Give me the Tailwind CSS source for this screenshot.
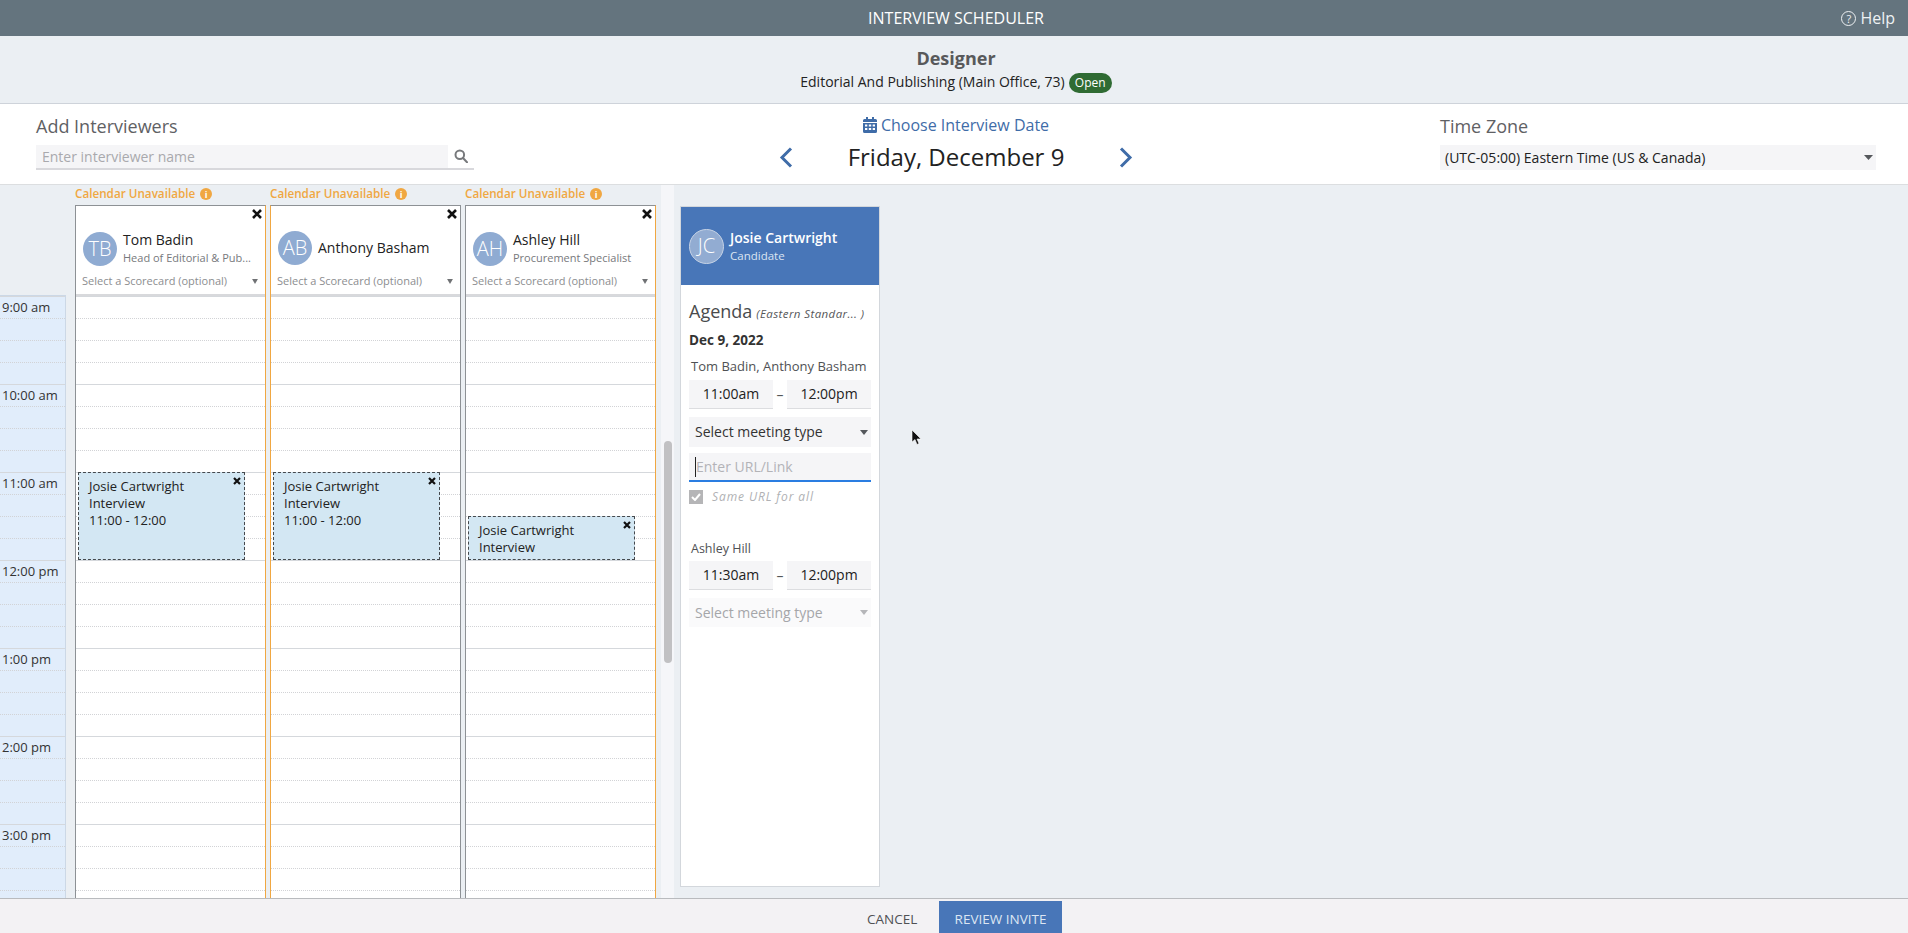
<!DOCTYPE html>
<html lang="en">

<head>
  <meta charset="UTF-8" />
  <title>Interview Scheduler</title>
  <script src="https://cdn.jsdelivr.net/npm/@tailwindcss/browser@4"></script>
</head>

<body class="h-screen overflow-hidden flex flex-col bg-[#ebeff3] text-[#222] font-['Open_Sans',sans-serif]">

  <!-- Top bar -->
  <header class="relative h-9 shrink-0 bg-[#64747e] text-white flex items-center justify-center text-base">
    <span class="pl-[4px]">INTERVIEW SCHEDULER</span>
    <a class="absolute right-[13px] top-0 h-9 flex items-center gap-[4px] text-base text-[#eef1f3]">
      <span class="w-[15px] h-[15px] rounded-full border-[1.500px] border-[#eef1f3] flex items-center justify-center text-[11px] leading-none">?</span>
      Help
    </a>
  </header>

  <!-- Job -->
  <section class="h-[68px] shrink-0 border-b border-[#ced3da] flex flex-col items-center pt-[10px]">
    <h1 class="text-lg leading-[24px] font-bold text-[#58595b] pl-[4px]">Designer</h1>
    <div class="flex items-center gap-[4px] text-sm leading-[24px] pl-[4px]">
      Editorial And Publishing (Main Office, 73)
      <span class="mt-[1px] h-[20px] w-[43px] rounded-full bg-[#2f6b33] text-white text-xs flex items-center justify-center">Open</span>
    </div>
  </section>

  <!-- Controls -->
  <section class="h-[81px] shrink-0 bg-white border-b border-[#dcdee0] flex justify-between pl-9 pr-8">
    <div class="w-[438px] pt-[10px]">
      <h2 class="text-lg leading-[25px] text-[#5f6164]">Add Interviewers</h2>
      <div class="mt-[6px] h-[25px] flex border-b-2 border-[#d8d8dc]">
        <div class="w-[412px] bg-[#f5f5f7] pl-[6px] text-sm leading-[23px] text-[#a9a9ad]">Enter interviewer name</div>
        <div class="flex-1 flex items-center justify-center pb-[1px]">
          <svg width="14" height="14" viewBox="0 0 14 14" fill="none" stroke="#77797c" stroke-width="2"><circle cx="5.8" cy="5.8" r="4.3" /><path d="M9 9l4 4.2" stroke-linecap="round" /></svg>
        </div>
      </div>
    </div>

    <div class="w-[354px] mr-[2px] pt-[10px] flex flex-col items-center">
      <div class="flex items-center gap-[4px] text-base leading-[22px] text-[#3f6ca8]">
        <svg width="14" height="16" viewBox="0 0 14 16" fill="#3f6ca8"><path d="M0 6h14v8.5a1.5 1.5 0 0 1-1.5 1.5h-11A1.5 1.5 0 0 1 0 14.500zM1.500 2H3V0h2v2h4V0h2v2h1.500A1.500 1.500 0 0 1 14 3.500V5H0V3.500A1.500 1.500 0 0 1 1.500 2z" /><path fill="#fff" d="M2 7.500h2.300v2H2zM5.800 7.500h2.400v2H5.800zM9.700 7.500H12v2H9.700zM2 11h2.300v2H2zM5.800 11h2.400v2H5.800zM9.700 11H12v2H9.700z" /></svg>
        Choose Interview Date
      </div>
      <div class="w-full mt-[4px] flex items-center justify-between">
        <svg class="mt-[1px]" width="14" height="21" viewBox="0 0 14 21" fill="none" stroke="#3f6ca8" stroke-width="3"><path d="M12 1.500L3 10.500l9 9" /></svg>
        <span class="text-2xl leading-[33px] text-[#222]">Friday, December 9</span>
        <svg class="mt-[1px]" width="14" height="21" viewBox="0 0 14 21" fill="none" stroke="#3f6ca8" stroke-width="3"><path d="M2 1.500l9 9-9 9" /></svg>
      </div>
    </div>

    <div class="w-[436px] pt-[10px]">
      <h2 class="text-lg leading-[25px] text-[#5f6164]">Time Zone</h2>
      <div class="mt-[6px] h-[25px] bg-[#f5f5f7] flex items-center justify-between pl-[5px] pr-[3px] text-sm">
        (UTC-05:00) Eastern Time (US &amp; Canada)
        <svg width="9" height="5" viewBox="0 0 9 5" fill="#55585c"><path d="M0 0h9L4.500 5z" /></svg>
      </div>
    </div>
  </section>

  <!-- Calendar and agenda -->
  <main class="flex-1 min-h-0 flex overflow-hidden">

    <!-- Time axis -->
    <div class="w-[66px] shrink-0 mt-[110px] bg-[#e1edfb] border-t border-r border-[#ccd8e6]" id="axis"></div>

    <!-- Interviewer columns -->
    <div class="ml-[9px] flex gap-[4px]">

      <div class="w-[191px] min-h-0 flex flex-col">
        <div class="h-[20px] shrink-0 pb-[2px] flex items-center gap-[5px] text-[11.700px] font-semibold text-[#f0a742]">Calendar Unavailable
          <span class="w-[12px] h-[12px] rounded-full bg-[#f0a742] text-white text-[9px] font-bold leading-none flex items-center justify-center">i</span>
        </div>
        <div class="flex-1 min-h-0 bg-white border-x border-t border-l-[#8d9195] border-r-[#f0a742] border-t-[#8d9195] flex flex-col">
          <div class="relative h-[90px] shrink-0 border-b-2 border-[#d8d9dc]">
            <svg class="absolute right-[3px] top-[3px]" width="10" height="10" viewBox="0 0 10 10" stroke="#111" stroke-width="2.600"><path d="M1 1l8 8M9 1l-8 8" /></svg>
            <div class="flex items-center pl-[7px] pt-[25px]">
              <div class="w-[34px] h-[34px] rounded-full bg-[#8fabd2] text-white text-xl font-light flex items-center justify-center">TB</div>
              <div class="ml-[6px]">
                <div class="text-sm leading-[18px]">Tom Badin</div>
                <div class="text-[11px] leading-[17px] text-[#77797c]">Head of Editorial &amp; Pub...</div>
              </div>
            </div>
            <div class="absolute left-[6px] right-[7px] bottom-[4px] flex items-center justify-between text-[11px] leading-[18px] text-[#8c8d90]">Select a Scorecard (optional)
              <svg width="6" height="5" viewBox="0 0 7 6" fill="#6f7174"><path d="M0 0h7L3.500 6z" /></svg>
            </div>
          </div>
          <div class="relative flex-1 min-h-0" data-hours>
            <div class="absolute z-10 left-[2px] top-[176px] w-[167px] h-[88px] bg-[#d3e7f3] border border-dashed border-[#45494d] pl-[10px] pt-[5px] text-[13px] leading-[17px]">
              <svg class="absolute right-[3px] top-[4px]" width="8" height="8" viewBox="0 0 8 8" stroke="#111" stroke-width="2.200"><path d="M1 1l6 6M7 1L1 7" /></svg>
              Josie Cartwright<br />Interview<br />11:00 - 12:00
            </div>
          </div>
        </div>
      </div>

      <div class="w-[191px] min-h-0 flex flex-col">
        <div class="h-[20px] shrink-0 pb-[2px] flex items-center gap-[5px] text-[11.700px] font-semibold text-[#f0a742]">Calendar Unavailable
          <span class="w-[12px] h-[12px] rounded-full bg-[#f0a742] text-white text-[9px] font-bold leading-none flex items-center justify-center">i</span>
        </div>
        <div class="flex-1 min-h-0 bg-white border-x border-t border-l-[#f0a742] border-r-[#8d9195] border-t-[#8d9195] flex flex-col">
          <div class="relative h-[90px] shrink-0 border-b-2 border-[#d8d9dc]">
            <svg class="absolute right-[3px] top-[3px]" width="10" height="10" viewBox="0 0 10 10" stroke="#111" stroke-width="2.600"><path d="M1 1l8 8M9 1l-8 8" /></svg>
            <div class="flex items-center pl-[7px] pt-[25px]">
              <div class="w-[34px] h-[34px] rounded-full bg-[#8fabd2] text-white text-xl font-light flex items-center justify-center">AB</div>
              <div class="ml-[6px] text-sm leading-[18px]">Anthony Basham</div>
            </div>
            <div class="absolute left-[6px] right-[7px] bottom-[4px] flex items-center justify-between text-[11px] leading-[18px] text-[#8c8d90]">Select a Scorecard (optional)
              <svg width="6" height="5" viewBox="0 0 7 6" fill="#6f7174"><path d="M0 0h7L3.500 6z" /></svg>
            </div>
          </div>
          <div class="relative flex-1 min-h-0" data-hours>
            <div class="absolute z-10 left-[2px] top-[176px] w-[167px] h-[88px] bg-[#d3e7f3] border border-dashed border-[#45494d] pl-[10px] pt-[5px] text-[13px] leading-[17px]">
              <svg class="absolute right-[3px] top-[4px]" width="8" height="8" viewBox="0 0 8 8" stroke="#111" stroke-width="2.200"><path d="M1 1l6 6M7 1L1 7" /></svg>
              Josie Cartwright<br />Interview<br />11:00 - 12:00
            </div>
          </div>
        </div>
      </div>

      <div class="w-[191px] min-h-0 flex flex-col">
        <div class="h-[20px] shrink-0 pb-[2px] flex items-center gap-[5px] text-[11.700px] font-semibold text-[#f0a742]">Calendar Unavailable
          <span class="w-[12px] h-[12px] rounded-full bg-[#f0a742] text-white text-[9px] font-bold leading-none flex items-center justify-center">i</span>
        </div>
        <div class="flex-1 min-h-0 bg-white border-x border-t border-l-[#8d9195] border-r-[#f0a742] border-t-[#8d9195] flex flex-col">
          <div class="relative h-[90px] shrink-0 border-b-2 border-[#d8d9dc]">
            <svg class="absolute right-[3px] top-[3px]" width="10" height="10" viewBox="0 0 10 10" stroke="#111" stroke-width="2.600"><path d="M1 1l8 8M9 1l-8 8" /></svg>
            <div class="flex items-center pl-[7px] pt-[25px]">
              <div class="w-[34px] h-[34px] rounded-full bg-[#8fabd2] text-white text-xl font-light flex items-center justify-center">AH</div>
              <div class="ml-[6px]">
                <div class="text-sm leading-[18px]">Ashley Hill</div>
                <div class="text-[11px] leading-[17px] text-[#77797c]">Procurement Specialist</div>
              </div>
            </div>
            <div class="absolute left-[6px] right-[7px] bottom-[4px] flex items-center justify-between text-[11px] leading-[18px] text-[#8c8d90]">Select a Scorecard (optional)
              <svg width="6" height="5" viewBox="0 0 7 6" fill="#6f7174"><path d="M0 0h7L3.500 6z" /></svg>
            </div>
          </div>
          <div class="relative flex-1 min-h-0" data-hours>
            <div class="absolute z-10 left-[2px] top-[220px] w-[167px] h-[44px] bg-[#d3e7f3] border border-dashed border-[#45494d] pl-[10px] pt-[5px] text-[13px] leading-[17px]">
              <svg class="absolute right-[3px] top-[4px]" width="8" height="8" viewBox="0 0 8 8" stroke="#111" stroke-width="2.200"><path d="M1 1l6 6M7 1L1 7" /></svg>
              Josie Cartwright<br />Interview
            </div>
          </div>
        </div>
      </div>
    </div>

    <!-- Scrollbar -->
    <div class="ml-[5px] w-[13px] shrink-0 bg-[#f5f6f9] pt-[256px] pl-[3px]">
      <div class="w-[8px] h-[222px] rounded-[4px] bg-[#c1c1c3]"></div>
    </div>

    <!-- Candidate agenda -->
    <aside class="ml-[6px] mt-[21px] w-[200px] h-[681px] shrink-0 bg-white border border-[#d3d7dc] flex flex-col">
      <div class="h-[78px] shrink-0 bg-[#4876b8] flex items-center pl-[8px] text-white">
        <div class="w-[35px] h-[35px] rounded-full bg-[#92acd2] border border-[#c6d3e6] text-xl flex items-center justify-center font-light">JC</div>
        <div class="ml-[6px]">
          <div class="text-sm leading-[19px] font-semibold">Josie Cartwright</div>
          <div class="text-[11.500px] leading-[17px] text-[#dbe5f2]">Candidate</div>
        </div>
      </div>
      <div class="px-[8px] pt-[12px] flex flex-col">
        <div class="flex items-baseline gap-[4px] leading-[26px]">
          <span class="text-lg text-[#4a4b4d]">Agenda</span>
          <span class="text-[11.500px] italic tracking-[0.400px] text-[#55575a]">(Eastern Standar... )</span>
        </div>
        <div class="mt-[3px] text-[13.500px] leading-[20px] font-bold text-[#333]">Dec 9, 2022</div>
        <div class="mt-[7px] pl-[2px] text-[13px] leading-[18px] whitespace-nowrap text-[#4f5154]">Tom Badin, Anthony Basham</div>

        <div class="mt-[5px] flex items-center text-sm">
          <div class="w-[84px] h-[29px] bg-[#f5f5f7] border-b border-[#dcdde0] flex items-center justify-center">11:00am</div>
          <div class="w-[14px] text-center text-[#55575a]">–</div>
          <div class="w-[84px] h-[29px] bg-[#f5f5f7] border-b border-[#dcdde0] flex items-center justify-center">12:00pm</div>
        </div>
        <div class="mt-[8px] h-[30px] w-[182px] bg-[#f5f5f7] flex items-center justify-between pl-[6px] pr-[3px] text-sm text-[#333]">Select meeting type
          <svg width="8" height="5" viewBox="0 0 8 5" fill="#55585c"><path d="M0 0h8L4 5z" /></svg>
        </div>
        <div class="mt-[6px] h-[29px] w-[182px] bg-[#f5f5f7] border-b-2 border-[#2a7de1] flex items-center pl-[6px] text-sm text-[#b3b3b7]">
          <span class="border-l border-[#222] leading-[20px]">Enter URL/Link</span>
        </div>
        <div class="mt-[7px] flex items-center gap-[9px] text-xs italic tracking-[0.900px] text-[#b0b1b4]">
          <span class="w-[14px] h-[14px] bg-[#b5b5b7] flex items-center justify-center">
            <svg width="10" height="8" viewBox="0 0 10 8" fill="none" stroke="#fff" stroke-width="2"><path d="M1 4l3 3 5-6" /></svg>
          </span>
          Same URL for all
        </div>

        <div class="mt-[35px] pl-[2px] text-[12.500px] leading-[18px] text-[#4f5154]">Ashley Hill</div>
        <div class="mt-[3px] flex items-center text-sm">
          <div class="w-[84px] h-[29px] bg-[#f5f5f7] border-b border-[#dcdde0] flex items-center justify-center">11:30am</div>
          <div class="w-[14px] text-center text-[#55575a]">–</div>
          <div class="w-[84px] h-[29px] bg-[#f5f5f7] border-b border-[#dcdde0] flex items-center justify-center">12:00pm</div>
        </div>
        <div class="mt-[8px] h-[29px] w-[182px] bg-[#fafafb] flex items-center justify-between pl-[6px] pr-[3px] text-sm text-[#a5a6a9]">Select meeting type
          <svg width="8" height="5" viewBox="0 0 8 5" fill="#b5b6b9"><path d="M0 0h8L4 5z" /></svg>
        </div>
      </div>
    </aside>
  </main>

  <!-- Footer -->
  <footer class="h-[35px] shrink-0 bg-[#f3f2f4] border-t border-[#b9bbbe] flex justify-center items-end pl-[21px] text-[13.500px]">
    <button class="h-[32px] w-[48px] pt-[5px] whitespace-nowrap text-[#4f5154]">CANCEL</button>
    <button class="ml-[24px] h-[32px] w-[123px] pt-[5px] bg-[#4876b8] text-[#dce6f3]">REVIEW INVITE</button>
  </footer>

  <!-- Mouse pointer -->
  <svg class="absolute left-[911px] top-[429px]" width="11" height="17" viewBox="0 0 11 17" fill="#111" stroke="#fff" stroke-width="0.600"><path d="M1 1v12l3-2.500 2 5 2-1-2-4.500h4z" /></svg>

  <script>
    // Quarter-hour rows for the day columns and the time axis
    const hours = ["9:00 am", "10:00 am", "11:00 am", "12:00 pm", "1:00 pm", "2:00 pm", "3:00 pm"];

    function makeRows(withLabels) {
      let html = "";
      hours.forEach((label) => {
        for (let q = 0; q < 4; q++) {
          const line = q === 0 ? "border-t border-solid border-[#d5d8dc]" : "border-t border-dotted border-[#d2d3d6]";
          const text = withLabels && q === 0 ? label : "";
          html += `<div class="h-[22px] pl-[2px] text-[13px] leading-[21px] text-[#333] ${line}">${text}</div>`;
        }
      });
      return html;
    }

    document.getElementById("axis").innerHTML = makeRows(true);
    document.querySelectorAll("[data-hours]").forEach((col) => {
      col.classList.add("overflow-hidden");
      col.insertAdjacentHTML("beforeend", makeRows(false));
    });
  </script>
</body>

</html>
